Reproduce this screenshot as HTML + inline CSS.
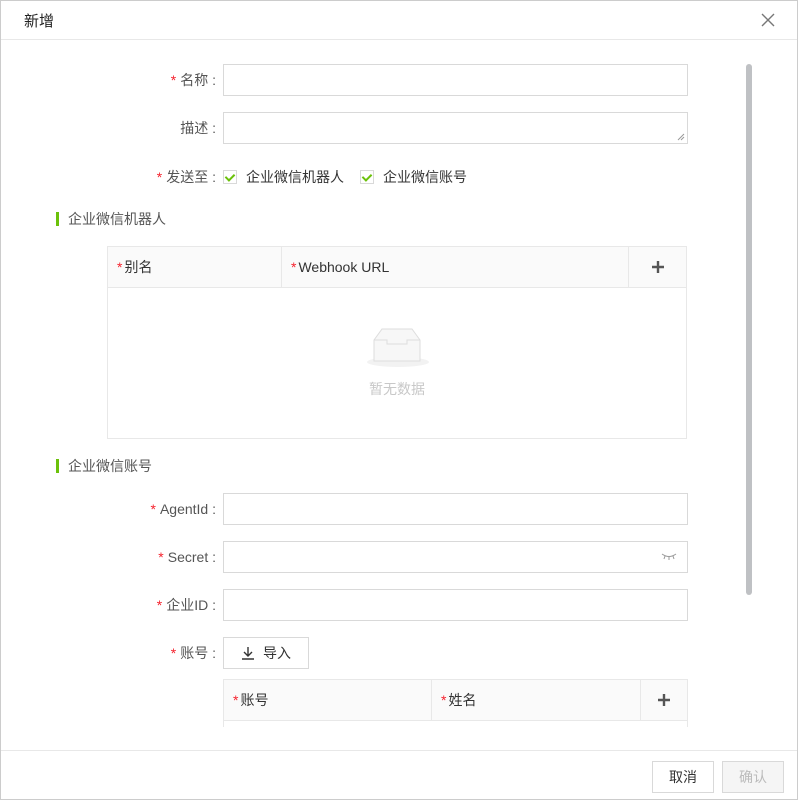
<!DOCTYPE html>
<html><head><meta charset="utf-8"><style>
*{box-sizing:border-box;margin:0;padding:0}
body{width:798px;height:800px;background:#fff;font-family:"Liberation Sans","Noto Sans CJK SC",sans-serif;font-size:14px;color:#333;position:relative;overflow:hidden}
.frame{position:absolute;left:0;top:0;width:798px;height:800px;border:1px solid #ccc}
.abs{position:absolute}
.hdr{left:1px;top:39px;width:796px;height:1px;background:#e8e8e8}
.ftr{left:1px;top:750px;width:796px;height:1px;background:#e8e8e8}
.lbl{position:absolute;right:582px;color:#555;white-space:nowrap;line-height:20px}
.req{color:#f5222d;margin-right:4px}
.inp{position:absolute;left:223px;width:465px;height:32px;border:1px solid #d9d9d9;background:#fff}
.sec{position:absolute;left:56px;height:14px;border-left:3px solid #6bc10a;padding-left:9px;line-height:14px;color:#555}
.cb{display:inline-block;width:14px;height:14px;border:1px solid #d9d9d9;vertical-align:-2px;position:relative;margin-right:9px}
.cb:after{content:"";position:absolute;left:3px;top:1px;width:4px;height:7px;border:solid #6bc10a;border-width:0 2px 2px 0;transform:rotate(45deg)}
.tbl{position:absolute;border:1px solid #e8e8e8;overflow:hidden}
.th{position:absolute;top:0;height:41px;background:#fafafa;border-bottom:1px solid #e8e8e8;line-height:40px;padding-left:9px;color:#333}
.plus{padding:0}
.plus svg{position:absolute;left:50%;top:50%;margin:-7px 0 0 -7px}
.btn{position:absolute;height:32px;border:1px solid #d9d9d9;background:#fff;text-align:center;line-height:30px}
</style></head><body>
<div class="frame"></div>
<div class="abs" style="left:24px;top:10px;font-size:15px;color:#222">新增</div>
<svg class="abs" style="left:761px;top:13px" width="14" height="14"><path d="M1 1L13 13M13 1L1 13" stroke="#777" stroke-width="1.4"/></svg>
<div class="abs hdr"></div>
<div class="abs" style="left:746px;top:64px;width:6px;height:531px;background:#bfc1c4;border-radius:3px"></div>

<div class="lbl" style="top:70px"><span class="req">*</span>名称 :</div>
<div class="inp" style="top:64px"></div>
<div class="lbl" style="top:118px">描述 :</div>
<div class="inp" style="top:112px"></div>
<svg class="abs" style="left:677px;top:133px" width="8" height="8"><path d="M7 1L1 7M7 4L4 7" stroke="#999"/></svg>
<div class="lbl" style="top:167px"><span class="req">*</span>发送至 :</div>
<div class="abs" style="left:223px;top:167px;line-height:20px;white-space:nowrap"><span class="cb"></span>企业微信机器人<span class="cb" style="margin-left:16px"></span>企业微信账号</div>

<div class="sec" style="top:212px">企业微信机器人</div>
<div class="tbl" style="left:107px;top:246px;width:580px;height:193px">
<div class="th" style="left:0;width:174px;border-right:1px solid #e8e8e8"><span class="req" style="margin-right:2px">*</span>别名</div>
<div class="th" style="left:174px;width:347px;border-right:1px solid #e8e8e8"><span class="req" style="margin-right:2px">*</span>Webhook URL</div>
<div class="th plus" style="left:521px;width:57px"><svg width="14" height="14"><path d="M7 1V13M1 7H13" stroke="#555" stroke-width="2.4"/></svg></div>
<svg class="abs" style="left:257px;top:80px" width="66" height="42"><ellipse cx="33" cy="35" rx="31" ry="5" fill="#f2f2f2"/><path d="M9 13L17 2H47L55 13V34H9Z" fill="#f7f7f7" stroke="#ddd"/><path d="M9 13H22V17H42V13H55" fill="none" stroke="#ddd"/></svg>
<div class="abs" style="left:0;width:578px;top:132px;text-align:center;color:#c8c8c8">暂无数据</div>
</div>

<div class="sec" style="top:459px">企业微信账号</div>
<div class="lbl" style="top:499px"><span class="req">*</span>AgentId :</div>
<div class="inp" style="top:493px"></div>
<div class="lbl" style="top:547px"><span class="req">*</span>Secret :</div>
<div class="inp" style="top:541px"></div>
<svg class="abs" style="left:661px;top:552px" width="16" height="8"><path d="M1 2Q8 7 15 2M4 4L3 7M8 5V8M12 4L13 7" stroke="#999" fill="none"/></svg>
<div class="lbl" style="top:595px"><span class="req">*</span>企业ID :</div>
<div class="inp" style="top:589px"></div>
<div class="lbl" style="top:643px"><span class="req">*</span>账号 :</div>
<div class="btn" style="left:223px;top:637px;width:86px"><svg style="vertical-align:-2px;margin-right:8px" width="14" height="14"><path d="M7 1V10M3 6L7 10L11 6M1 13H13" stroke="#333" stroke-width="1.4" fill="none"/></svg>导入</div>
<div class="tbl" style="left:223px;top:679px;width:465px;height:48px;border-bottom:none">
<div class="th" style="left:0;width:208px;border-right:1px solid #e8e8e8"><span class="req" style="margin-right:2px">*</span>账号</div>
<div class="th" style="left:208px;width:209px;border-right:1px solid #e8e8e8"><span class="req" style="margin-right:2px">*</span>姓名</div>
<div class="th plus" style="left:417px;width:46px"><svg width="14" height="14"><path d="M7 1V13M1 7H13" stroke="#555" stroke-width="2.4"/></svg></div>
</div>
<div class="abs ftr"></div>
<div class="btn" style="left:652px;top:761px;width:62px">取消</div>
<div class="btn" style="left:722px;top:761px;width:62px;background:#f5f5f5;color:#bbb">确认</div>
</body></html>
